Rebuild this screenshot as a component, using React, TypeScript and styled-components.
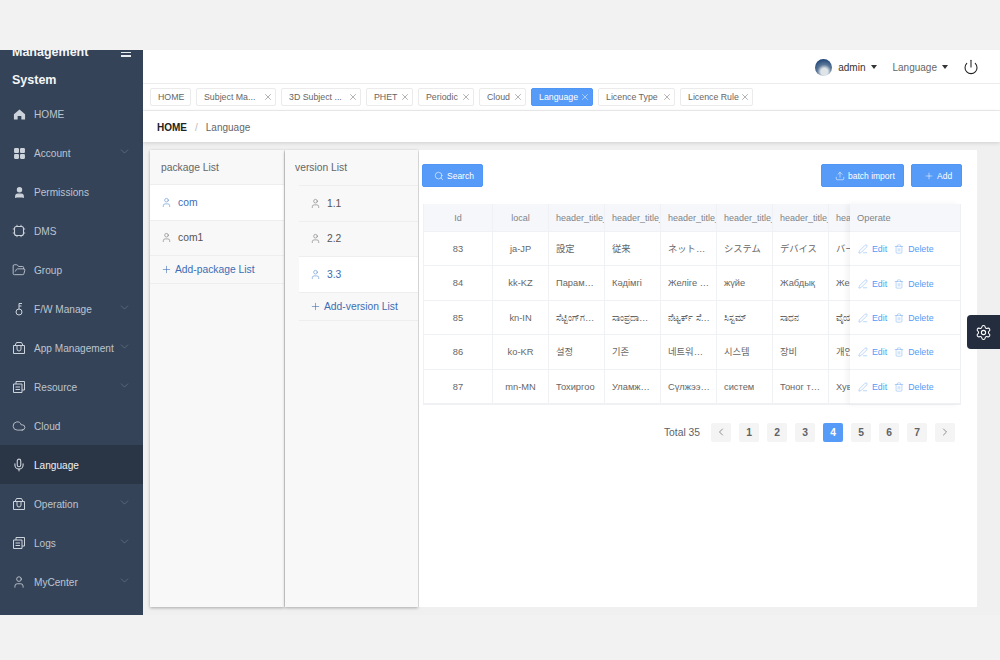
import React from "react";
import styled, { createGlobalStyle } from "styled-components";
import {
  ChevronDown,
  ChevronLeft,
  ChevronRight,
  Cloud,
  FolderOpen,
  LayoutGrid,
  Mic,
  PenLine,
  Plus,
  Power,
  Search,
  Settings,
  Trash2,
  Upload,
  User,
  X,
} from "lucide-react";

const GlobalStyle = createGlobalStyle`
  html, body {
    margin: 0;
    padding: 0;
    background: #f2f2f2;
    height: 660px;
    overflow: hidden;
    font-family: "Liberation Sans", "Noto Sans", "Noto Sans CJK JP", "Noto Sans CJK KR", sans-serif;
  }
  * { box-sizing: border-box; }
`;

const HomeIcon = () => (
  <svg width="13" height="13" viewBox="0 0 14 14" fill="currentColor">
    <path fillRule="evenodd" d="M7 1.5 13 6.8v5.7H9V8.5H5v4H1V6.8z" />
  </svg>
);

const ChipIcon = () => (
  <svg width="14" height="14" viewBox="0 0 14 14" fill="none" stroke="currentColor" strokeWidth="1.1">
    <rect x="2.5" y="2.5" width="9" height="9" rx="2" />
    <path d="M5 .8v1.4M9 .8v1.4M5 11.8v1.4M9 11.8v1.4M.8 5h1.4M.8 9h1.4M11.8 5h1.4M11.8 9h1.4" strokeWidth="0.9" />
  </svg>
);

const BoxIcon = () => (
  <svg width="14" height="14" viewBox="0 0 14 14" fill="none" stroke="currentColor" strokeWidth="1">
    <path d="M1.5 4.5h11v8h-11z" />
    <path d="M3 4.5 4.5 1.5h5L11 4.5" />
    <path d="M5 4.5v3.5a2 2 0 0 0 4 0V4.5" />
  </svg>
);

const PagesIcon = () => (
  <svg width="14" height="14" viewBox="0 0 14 14" fill="none" stroke="currentColor" strokeWidth="1">
    <path d="M1.5 4h8.5v8.5H1.5z" />
    <path d="M4 4V1.5h8.5V10H10" />
    <path d="M3.5 7h4.5M3.5 9.5h4.5" />
  </svg>
);

const KeyIcon = () => (
  <svg width="14" height="14" viewBox="0 0 14 14" fill="none" stroke="currentColor" strokeWidth="1">
    <circle cx="7" cy="10" r="3" />
    <path d="M7 7V1.5h3M7 4h2.5" />
  </svg>
);

const menu = [
  { label: "HOME", icon: <HomeIcon /> },
  { label: "Account", icon: <LayoutGrid size={13} fill="currentColor" />, more: true },
  { label: "Permissions", icon: <User size={13} fill="currentColor" /> },
  { label: "DMS", icon: <ChipIcon /> },
  { label: "Group", icon: <FolderOpen size={14} strokeWidth={1.4} /> },
  { label: "F/W Manage", icon: <KeyIcon />, more: true },
  { label: "App Management", icon: <BoxIcon />, more: true },
  { label: "Resource", icon: <PagesIcon />, more: true },
  { label: "Cloud", icon: <Cloud size={14} strokeWidth={1.4} /> },
  { label: "Language", icon: <Mic size={14} strokeWidth={1.9} />, active: true },
  { label: "Operation", icon: <BoxIcon />, more: true },
  { label: "Logs", icon: <PagesIcon />, more: true },
  { label: "MyCenter", icon: <User size={14} strokeWidth={1.4} />, more: true },
];

const tabs = [
  { label: "HOME", width: 41, fixed: true },
  { label: "Subject Ma...", width: 80 },
  { label: "3D Subject ...", width: 80 },
  { label: "PHET", width: 47 },
  { label: "Periodic", width: 56 },
  { label: "Cloud", width: 47 },
  { label: "Language", width: 62, active: true },
  { label: "Licence Type", width: 77 },
  { label: "Licence Rule", width: 73 },
];

const headers = ["Id", "local", "header_title_", "header_title_", "header_title_", "header_title_", "header_title_", "header_title_"];

const rows = [
  ["83", "ja-JP", "設定", "従来", "ネットワーク設定", "システム", "デバイス", "バージョン"],
  ["84", "kk-KZ", "Параметрлер", "Кәдімгі", "Желіге қосылу", "жүйе", "Жабдық", "Жеке"],
  ["85", "kn-IN", "ಸೆಟ್ಟಿಂಗ್‌ಗಳು ಮತ್ತು", "ಸಾಂಪ್ರದಾಯಿಕ ಮೋಡ್", "ನೆಟ್ವರ್ಕ್ ಸೆಟ್ಟಿಂಗ್", "ಸಿಸ್ಟಮ್", "ಸಾಧನ", "ವೈಯಕ್ತಿಕ"],
  ["86", "ko-KR", "설정", "기존", "네트워크 설정", "시스템", "장비", "개인"],
  ["87", "mn-MN", "Тохиргоо", "Уламжлалт", "Сүлжээний тохиргоо", "систем", "Тоног төхөөрөмж", "Хувийн"],
];

const App = () => {
  return (
    <>
      <GlobalStyle />
      <Frame>
        <Sidebar>
          <Brand>
            <BrandLine>
              Management
              <BrandToggle>
                <span />
                <span />
                <span />
              </BrandToggle>
            </BrandLine>
            <BrandLine>System</BrandLine>
          </Brand>
          {menu.map((item) => (
            <MenuRow key={item.label} $active={item.active}>
              <MenuIcon>{item.icon}</MenuIcon>
              <MenuLabel>{item.label}</MenuLabel>
              {item.more && (
                <MenuArrow>
                  <ChevronDown size={13} strokeWidth={0.9} />
                </MenuArrow>
              )}
            </MenuRow>
          ))}
        </Sidebar>

        <Main>
          <TopBar>
            <Avatar />
            <TopName>admin</TopName>
            <Caret />
            <TopLang>Language</TopLang>
            <Caret />
            <PowerWrap>
              <Power size={16} strokeWidth={1.6} />
            </PowerWrap>
          </TopBar>

          <TabsBar>
            {tabs.map((tab) => (
              <Tab key={tab.label} $active={tab.active} $w={tab.width}>
                {tab.label}
                {!tab.fixed && <X size={10} strokeWidth={1.2} />}
              </Tab>
            ))}
          </TabsBar>

          <Crumbs>
            <CrumbHome>HOME</CrumbHome>
            <CrumbSep>/</CrumbSep>
            <CrumbPage>Language</CrumbPage>
          </Crumbs>

          <Content>
            <ListPanel>
              <ListTitle>package List</ListTitle>
              <ListItem $active>
                <User size={11} strokeWidth={1.3} />
                com
              </ListItem>
              <ListItem>
                <User size={11} strokeWidth={1.3} />
                com1
              </ListItem>
              <ListAdd>
                <Plus size={11} strokeWidth={1.3} />
                Add-package List
              </ListAdd>
            </ListPanel>

            <ListPanel $second>
              <ListTitle $second>version List</ListTitle>
              <ListBody>
                <ListItem>
                  <User size={11} strokeWidth={1.3} />
                  1.1
                </ListItem>
                <ListItem>
                  <User size={11} strokeWidth={1.3} />
                  2.2
                </ListItem>
                <ListItem $active>
                  <User size={11} strokeWidth={1.3} />
                  3.3
                </ListItem>
                <ListAdd>
                  <Plus size={11} strokeWidth={1.3} />
                  Add-version List
                </ListAdd>
              </ListBody>
            </ListPanel>

            <TablePanel>
              <Toolbar>
                <PrimaryButton $w={61} $left={11}>
                  <Search size={10} strokeWidth={1.4} />
                  Search
                </PrimaryButton>
                <ToolbarRight>
                  <PrimaryButton $w={83} $left={13}>
                    <Upload size={10} strokeWidth={1.3} />
                    batch import
                  </PrimaryButton>
                  <PrimaryButton $w={51} $left={12}>
                    <Plus size={10} strokeWidth={1.3} />
                    Add
                  </PrimaryButton>
                </ToolbarRight>
              </Toolbar>

              <TableWrap>
                <DataArea>
                  <DataRow $head>
                    {headers.map((h, i) => (
                      <HeadCell key={i} $center={i < 2} $w={i === 0 ? 69 : 56}>
                        {h}
                      </HeadCell>
                    ))}
                  </DataRow>
                  {rows.map((row) => (
                    <DataRow key={row[0]}>
                      {row.map((cell, i) => (
                        <BodyCell key={i} $center={i < 2} $w={i === 0 ? 69 : 56}>
                          {cell}
                        </BodyCell>
                      ))}
                    </DataRow>
                  ))}
                </DataArea>

                <OperateColumn>
                  <OperateHead>Operate</OperateHead>
                  {rows.map((row) => (
                    <OperateCell key={row[0]}>
                      <PenLine size={10} strokeWidth={1.1} />
                      <OpText>Edit</OpText>
                      <Trash2 size={10} strokeWidth={1.1} />
                      <OpText>Delete</OpText>
                    </OperateCell>
                  ))}
                </OperateColumn>
              </TableWrap>

              <Pager>
                <PagerTotal>Total 35</PagerTotal>
                <PagerButton>
                  <ChevronLeft size={12} strokeWidth={1.4} />
                </PagerButton>
                {[1, 2, 3, 4, 5, 6, 7].map((n) => (
                  <PagerButton key={n} $active={n === 4}>
                    {n}
                  </PagerButton>
                ))}
                <PagerButton>
                  <ChevronRight size={12} strokeWidth={1.4} />
                </PagerButton>
              </Pager>
            </TablePanel>
          </Content>
        </Main>

        <GearTab>
          <Settings size={17} strokeWidth={1.5} />
        </GearTab>
      </Frame>
    </>
  );
};

export default App;

const Frame = styled.div`
  position: relative;
  display: flex;
  width: 1000px;
  height: 565px;
  margin-top: 50px;
`;

const Sidebar = styled.div`
  width: 143px;
  flex-shrink: 0;
  height: 100%;
  overflow: hidden;
  background: #354358;
  color: #b9c3cf;
`;

const Brand = styled.div`
  margin-top: -12px;
  padding: 0 12px;
  height: 56px;
  color: #f4f6f8;
  font-size: 12.5px;
  font-weight: bold;
`;

const BrandLine = styled.div`
  display: flex;
  align-items: center;
  justify-content: space-between;
  height: 28px;
`;

const BrandToggle = styled.div`
  display: flex;
  flex-direction: column;
  gap: 2px;
  width: 10px;
  margin-top: 1px;
  span {
    display: block;
    height: 1.5px;
    background: #e8ebef;
  }
`;

const MenuRow = styled.div<{ $active?: boolean }>`
  display: flex;
  align-items: center;
  height: 39px;
  padding: 1px 0 0 12px;
  font-size: 10.1px;
  color: ${(p) => (p.$active ? "#eef1f5" : "#bcc5d0")};
  background: ${(p) => (p.$active ? "#2a3546" : "transparent")};
`;

const MenuIcon = styled.span`
  display: flex;
  justify-content: center;
  width: 14px;
  margin-right: 8px;
  color: #cdd3db;
`;

const MenuLabel = styled.span`
  flex: 1;
  white-space: nowrap;
`;

const MenuArrow = styled.span`
  display: flex;
  margin-right: 12px;
  margin-top: -4px;
  color: #7e8b9b;
`;

const Main = styled.div`
  flex: 1;
  display: flex;
  flex-direction: column;
  min-width: 0;
  background: #f0f0f0;
`;

const TopBar = styled.div`
  display: flex;
  align-items: center;
  justify-content: flex-end;
  height: 34px;
  padding: 1px 21px 0 0;
  background: #fff;
  border-bottom: 1px solid #ececec;
  font-size: 10px;
`;

const Avatar = styled.div`
  width: 17px;
  height: 17px;
  border-radius: 50%;
  margin-right: 6px;
  background: radial-gradient(circle at 55% 75%, #dfe4e8 0 22%, #5c7898 45%, #1f4477 80%);
`;

const TopName = styled.span`
  color: #333;
`;

const TopLang = styled.span`
  color: #666;
  margin-left: 16px;
`;

const Caret = styled.span`
  width: 0;
  height: 0;
  margin-left: 5px;
  border-left: 3px solid transparent;
  border-right: 3px solid transparent;
  border-top: 4px solid #333;
`;

const PowerWrap = styled.span`
  display: flex;
  margin-left: 15px;
  color: #222;
`;

const TabsBar = styled.div`
  display: flex;
  align-items: center;
  gap: 5px;
  height: 27px;
  padding: 0 7px;
  background: #fff;
  border-bottom: 1px solid #eeeeee;
`;

const Tab = styled.div<{ $active?: boolean; $w: number }>`
  display: flex;
  align-items: center;
  justify-content: space-between;
  width: ${(p) => p.$w}px;
  height: 18px;
  padding: 0 2px 0 7px;
  border: 1px solid ${(p) => (p.$active ? "#4f96f5" : "#ebebeb")};
  border-radius: 2px;
  font-size: 8.8px;
  white-space: nowrap;
  color: ${(p) => (p.$active ? "#fff" : "#666")};
  background: ${(p) => (p.$active ? "#559bf7" : "#fff")};
`;

const Crumbs = styled.div`
  display: flex;
  align-items: center;
  height: 31px;
  padding: 1px 0 0 14px;
  background: #fff;
  font-size: 10px;
  box-shadow: 0 1px 4px rgba(0, 0, 0, 0.14);
  position: relative;
`;

const CrumbHome = styled.span`
  font-weight: bold;
  color: #222;
`;

const CrumbSep = styled.span`
  margin: 0 8px;
  color: #bbb;
`;

const CrumbPage = styled.span`
  color: #666;
`;

const Content = styled.div`
  flex: 1;
  display: flex;
  padding: 8px 23px 8px 7px;
  min-height: 0;
`;

const ListPanel = styled.div<{ $second?: boolean }>`
  width: ${(p) => (p.$second ? "133px" : "134px")};
  margin-left: ${(p) => (p.$second ? "1px" : "0")};
  flex-shrink: 0;
  background: #f8f8f8;
  box-shadow: 0 1px 3px rgba(0, 0, 0, 0.3);
  font-size: 10.3px;
`;

const ListTitle = styled.div<{ $second?: boolean }>`
  display: flex;
  align-items: center;
  height: 35px;
  padding-left: ${(p) => (p.$second ? "10px" : "11px")};
  color: #666;
  border-bottom: ${(p) => (p.$second ? "none" : "1px solid #eeeeee")};
`;

const ListBody = styled.div`
  margin-left: 14px;
  border-top: 1px solid #eeeeee;
`;

const ListItem = styled.div<{ $active?: boolean }>`
  display: flex;
  align-items: center;
  gap: 6px;
  height: 35.5px;
  padding-left: 11px;
  border-bottom: 1px solid #eeeeee;
  color: ${(p) => (p.$active ? "#3c6db5" : "#555")};
  background: ${(p) => (p.$active ? "#fff" : "transparent")};
  svg {
    color: ${(p) => (p.$active ? "#5b8fd0" : "#777")};
  }
`;

const ListAdd = styled.div`
  display: flex;
  align-items: center;
  gap: 3px;
  height: 28px;
  padding-left: 11px;
  border-bottom: 1px solid #eeeeee;
  color: #3c6db5;
`;

const TablePanel = styled.div`
  flex: 1;
  min-width: 0;
  margin-left: 1px;
  padding: 14px 15px 0 3px;
  background: #fff;
`;

const Toolbar = styled.div`
  display: flex;
  justify-content: space-between;
  align-items: center;
  height: 23px;
  margin-bottom: 17px;
`;

const ToolbarRight = styled.div`
  display: flex;
  gap: 7px;
`;

const PrimaryButton = styled.div<{ $w: number; $left: number }>`
  display: flex;
  align-items: center;
  gap: 3px;
  width: ${(p) => p.$w}px;
  height: 23px;
  padding-left: ${(p) => p.$left}px;
  border-radius: 2px;
  background: #559bf7;
  border: 1px solid #4f96f5;
  color: #fff;
  font-size: 8.5px;
  white-space: nowrap;
`;

const TableWrap = styled.div`
  display: flex;
  width: 538px;
  margin-left: 1px;
  border-bottom: 1px solid #eff1f5;
  border-left: 1px solid #eff1f5;
  border-right: 1px solid #eff1f5;
  font-size: 9.3px;
`;

const DataArea = styled.div`
  width: 426px;
  flex-shrink: 0;
  overflow: hidden;
`;

const DataRow = styled.div<{ $head?: boolean }>`
  display: flex;
  height: ${(p) => (p.$head ? "28px" : "34.4px")};
  background: ${(p) => (p.$head ? "#f6f7fb" : "#fff")};
  border-bottom: 1px solid #eff1f5;
`;

const HeadCell = styled.div<{ $center?: boolean; $w: number }>`
  flex: 0 0 ${(p) => p.$w}px;
  display: flex;
  align-items: center;
  justify-content: ${(p) => (p.$center ? "center" : "flex-start")};
  padding-left: ${(p) => (p.$center ? "0" : "7px")};
  overflow: hidden;
  font-size: 9px;
  white-space: nowrap;
  color: #808388;
  border-right: 1px solid #eff1f5;
`;

const BodyCell = styled.div<{ $center?: boolean; $w: number }>`
  flex: 0 0 ${(p) => p.$w}px;
  align-self: stretch;
  line-height: 34px;
  text-align: ${(p) => (p.$center ? "center" : "left")};
  padding: 0 ${(p) => (p.$center ? "0" : "6px")} 0 ${(p) => (p.$center ? "0" : "7px")};
  overflow: hidden;
  white-space: nowrap;
  text-overflow: ellipsis;
  color: #666;
  border-right: 1px solid #eff1f5;
`;

const OperateColumn = styled.div`
  flex: 1;
  background: #fff;
  box-shadow: -3px 0 6px rgba(0, 0, 0, 0.05);
  position: relative;
`;

const OperateHead = styled.div`
  display: flex;
  align-items: center;
  height: 28px;
  padding-left: 7px;
  background: #f6f7fb;
  border-bottom: 1px solid #eff1f5;
  color: #808388;
`;

const OperateCell = styled.div`
  display: flex;
  align-items: center;
  height: 34.4px;
  padding: 1px 0 0 8px;
  gap: 4px;
  font-size: 8.8px;
  color: #6ea6ef;
  border-bottom: 1px solid #eff1f5;
`;

const OpText = styled.span`
  margin-right: 3px;
  color: #559bf7;
`;

const Pager = styled.div`
  display: flex;
  align-items: center;
  width: 533px;
  justify-content: flex-end;
  gap: 8px;
  margin-top: 18px;
  font-size: 10.3px;
`;

const PagerTotal = styled.span`
  color: #606266;
  margin-right: 3px;
`;

const PagerButton = styled.div<{ $active?: boolean }>`
  display: flex;
  align-items: center;
  justify-content: center;
  width: 20px;
  height: 19px;
  border-radius: 2px;
  font-weight: bold;
  background: ${(p) => (p.$active ? "#559bf7" : "#f4f4f5")};
  color: ${(p) => (p.$active ? "#fff" : "#606266")};
`;

const GearTab = styled.div`
  position: absolute;
  right: 0;
  top: 265px;
  width: 33px;
  height: 34px;
  display: flex;
  align-items: center;
  justify-content: center;
  border-radius: 4px 0 0 4px;
  background: #242d3d;
  color: #fff;
`;
